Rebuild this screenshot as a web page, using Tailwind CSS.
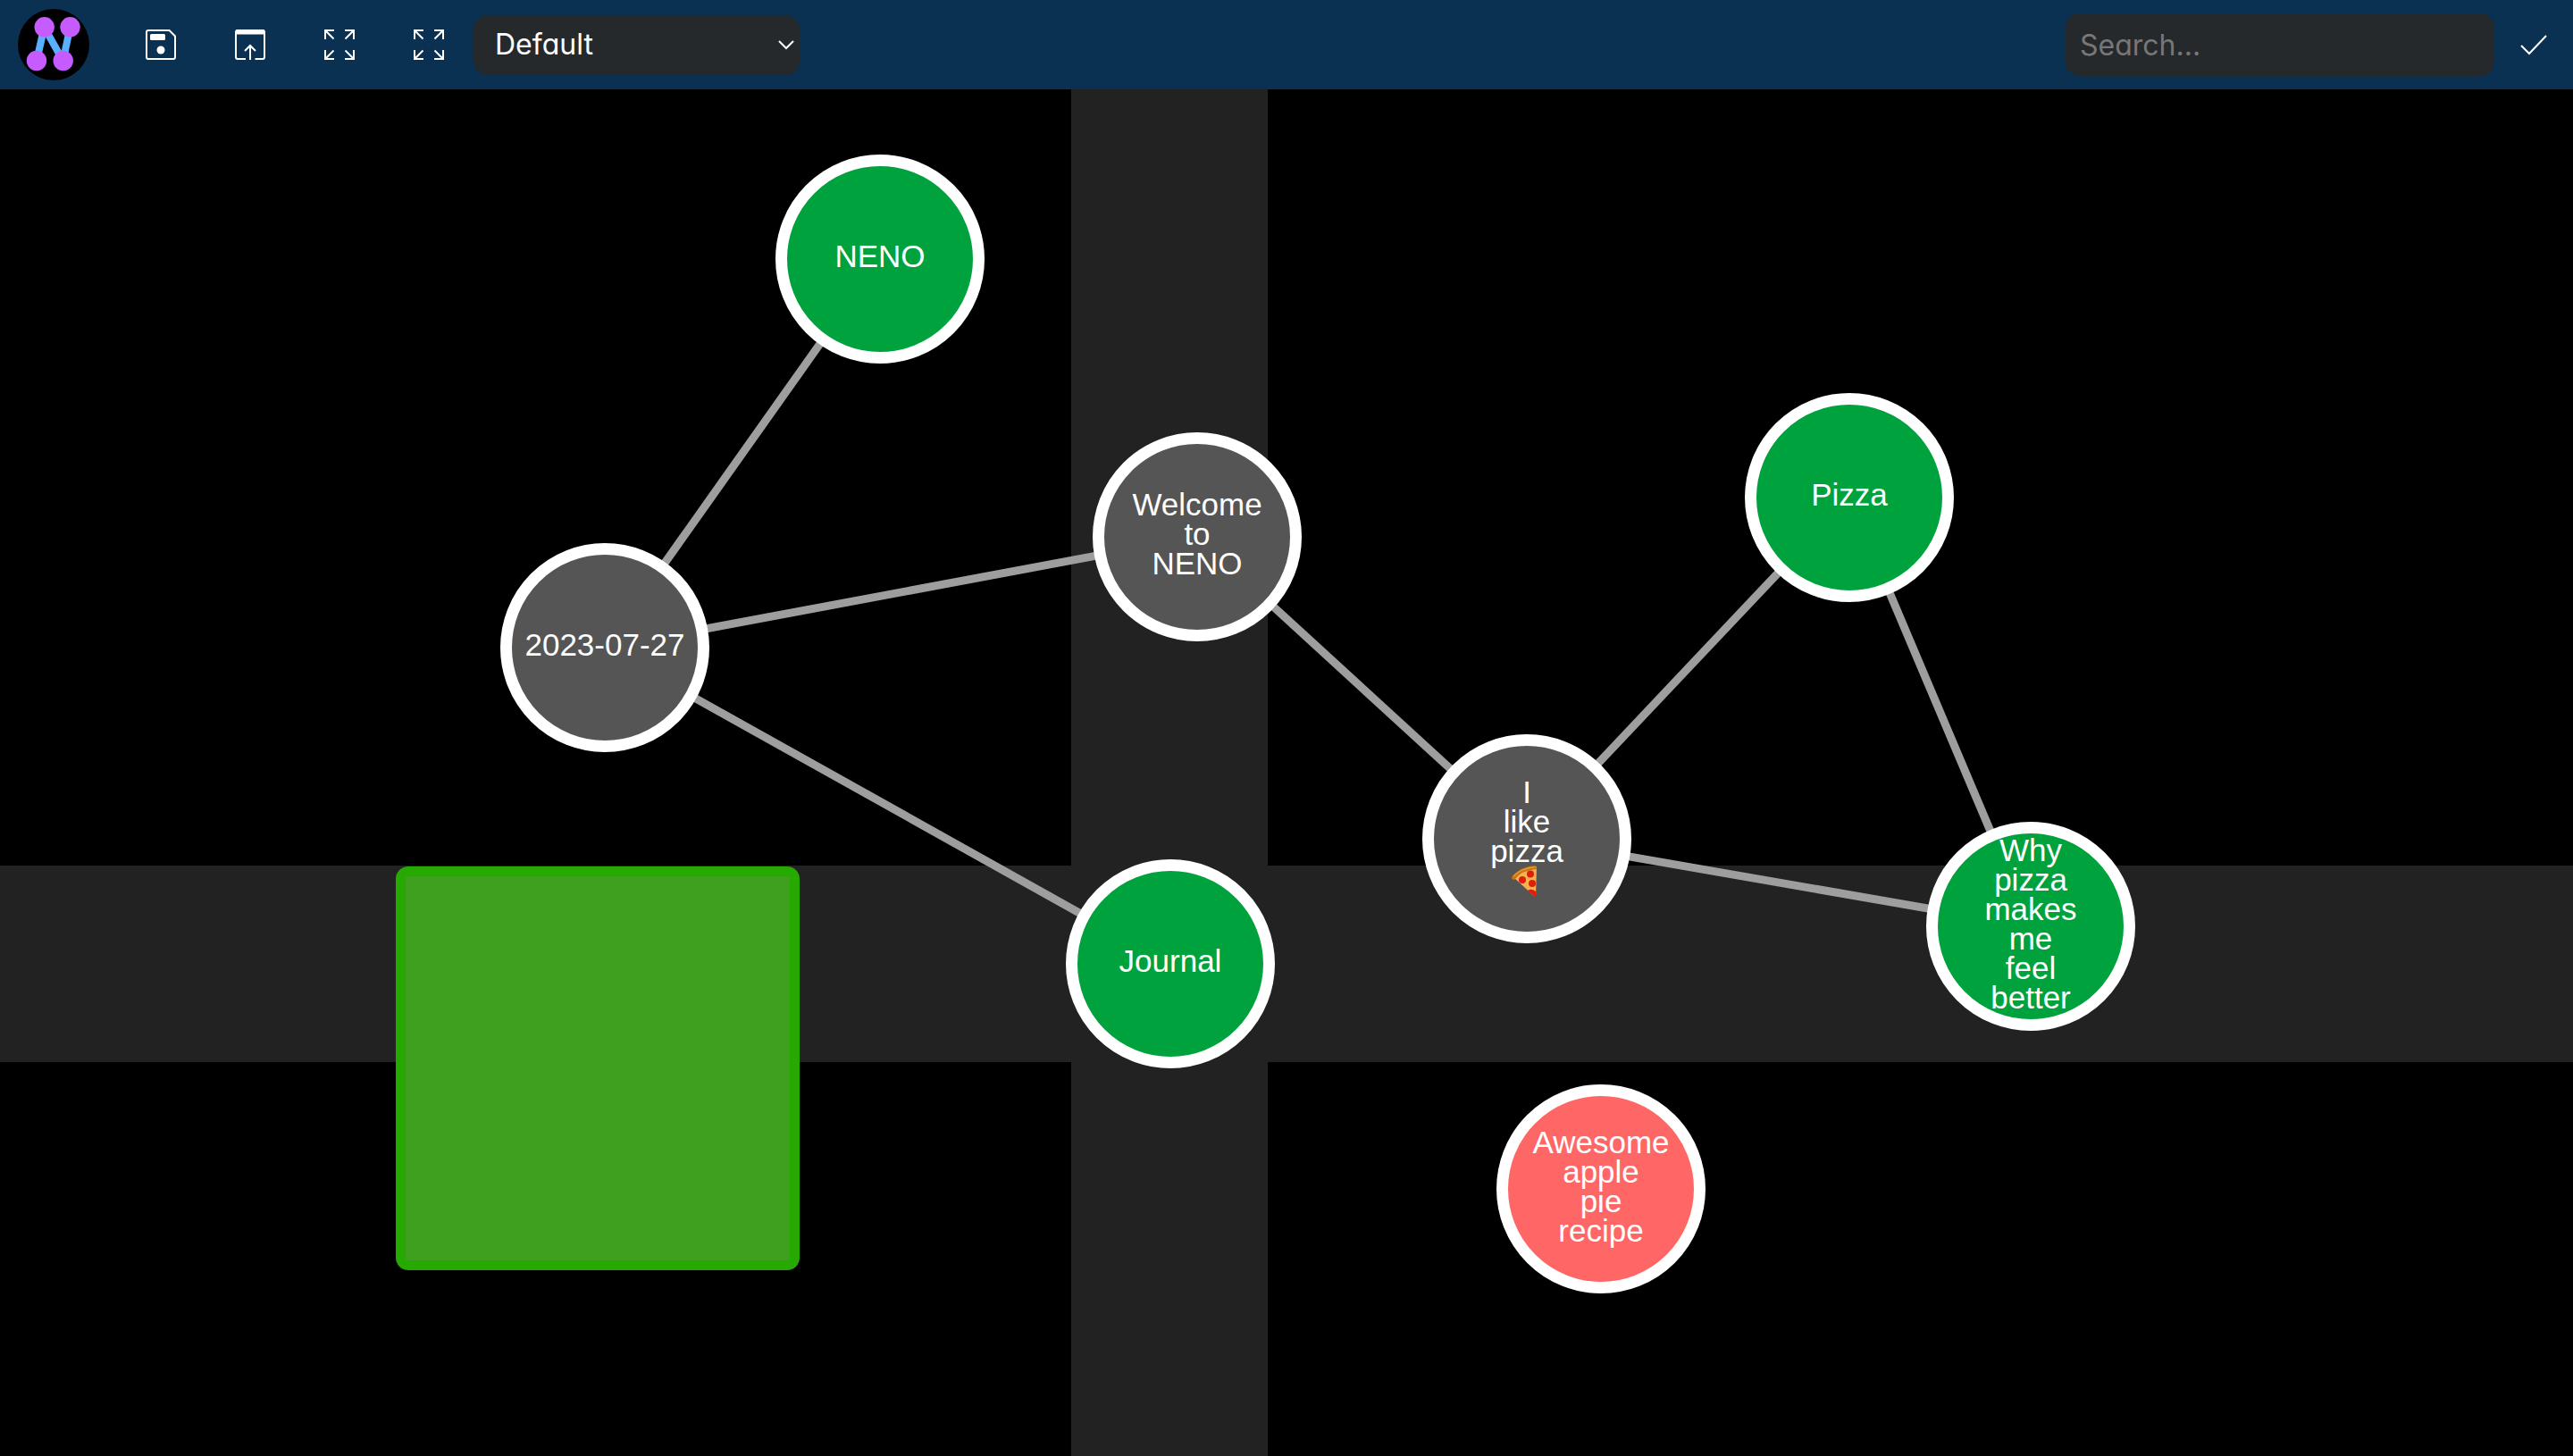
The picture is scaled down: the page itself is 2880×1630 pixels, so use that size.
<!DOCTYPE html>
<html lang="en">
<head>
<meta charset="utf-8">
<meta name="viewport" content="width=device-width, initial-scale=1">
<title>NENO</title>
<script src="https://cdn.jsdelivr.net/npm/@tailwindcss/browser@4"></script>
</head>
<body class="flex min-h-screen flex-col bg-black text-white">
<header class="flex h-[100px] shrink-0 items-center bg-[#0a3152] font-[Inter,sans-serif] [font-feature-settings:'cv11']">
  <a href="#" aria-label="NENO home" class="ml-5 mr-[30px] shrink-0">
    <svg class="size-20" viewBox="20 10 80 80" aria-hidden="true">
      <circle cx="60" cy="50" r="40" fill="#000"/>
      <path d="M41 68 49.500 30.500 70.500 68 78.500 30.500" fill="none" stroke="#58b0ff" stroke-width="8"/>
      <g fill="#c65cff"><circle cx="49.700" cy="30.300" r="11.200"/><circle cx="78.500" cy="30.300" r="11.200"/><circle cx="41" cy="68" r="11.200"/><circle cx="70.700" cy="68" r="11.200"/></g>
    </svg>
  </a>
  <nav class="flex shrink-0" aria-label="Graph actions">
    <button type="button" aria-label="Save" class="flex size-[100px] items-center justify-center">
      <svg class="size-[34px]" viewBox="0 0 34 34" fill="none" stroke="#fff" stroke-width="2"><path d="M3 1H26.500L33 7.500V31a2 2 0 0 1-2 2H3a2 2 0 0 1-2-2V3a2 2 0 0 1 2-2z"/><rect x="5" y="5" width="17" height="7" rx="1.500" fill="#fff" stroke="none"/><circle cx="17" cy="23" r="4.500" fill="#fff" stroke="none"/></svg>
    </button>
    <button type="button" aria-label="Import" class="flex size-[100px] items-center justify-center">
      <svg class="size-[34px]" viewBox="0 0 34 34" fill="none" stroke="#fff" stroke-width="2"><path d="M12 33H3a2 2 0 0 1-2-2V3a2 2 0 0 1 2-2H31a2 2 0 0 1 2 2V31a2 2 0 0 1-2 2H22.500"/><path d="M1 3H33" stroke-width="5"/><path d="M17 34V18M11 24 17 18 23 24"/></svg>
    </button>
    <button type="button" aria-label="Fit view" class="flex size-[100px] items-center justify-center">
      <svg class="size-[34px]" viewBox="0 0 34 34" fill="none" stroke="#fff" stroke-width="2"><path d="M1 11V1H11M1 1 10.500 10.500M23 1H33V11M33 1 23.500 10.500M1 23V33H11M1 33 10.500 23.500M33 23V33H23M33 33 23.500 23.500"/></svg>
    </button>
    <button type="button" aria-label="Fullscreen" class="flex size-[100px] items-center justify-center">
      <svg class="size-[34px]" viewBox="0 0 34 34" fill="none" stroke="#fff" stroke-width="2"><path d="M1 11V1H11M1 1 10.500 10.500M23 1H33V11M33 1 23.500 10.500M1 23V33H11M1 33 10.500 23.500M33 23V33H23M33 33 23.500 23.500"/></svg>
    </button>
  </nav>
  <div class="grid w-[365px] shrink-0 items-center">
    <select aria-label="View" class="col-start-1 row-start-1 h-[67px] w-full appearance-none rounded-2xl bg-[#25292c] pl-6 pr-12 text-[32px] outline-none">
      <option>Default</option>
    </select>
    <svg class="pointer-events-none col-start-1 row-start-1 mr-1.5 h-3 w-[18px] justify-self-end" viewBox="0 0 18 12" fill="none" stroke="#fff" stroke-width="2" aria-hidden="true"><path d="M1 2 9 10 17 2"/></svg>
  </div>
  <input type="search" aria-label="Search" placeholder="Search..." class="ml-auto h-[70px] w-[480px] rounded-2xl bg-[#25292c] px-4 text-[32px] outline-none placeholder:text-[#777]">
  <button type="button" aria-label="Apply" class="flex h-[100px] w-[88px] shrink-0 items-center justify-center">
    <svg class="h-6 w-[30px]" viewBox="0 0 30 24" fill="none" stroke="#fff" stroke-width="2"><path d="M1 13 10 22 29 2"/></svg>
  </button>
</header>
<main class="relative flex-1 overflow-hidden font-['Liberation_Sans',Arial,sans-serif] text-[35px]/[33px]">
  <div class="absolute inset-y-0 left-[1199px] w-[220px] bg-[#222]"></div>
  <div class="absolute inset-x-0 top-[869px] h-[220px] bg-[#222]"></div>
  <div class="absolute left-[443px] top-[870px] size-[452px] rounded-[14px] border-[11px] border-[#26a900] bg-[#3fa020]"></div>
  <svg class="absolute inset-0 size-full" stroke="#9e9e9e" stroke-width="9" aria-hidden="true">
    <line x1="985" y1="190" x2="677" y2="625"/>
    <line x1="677" y1="625" x2="1340" y2="501"/>
    <line x1="677" y1="625" x2="1310" y2="979"/>
    <line x1="1340" y1="501" x2="1709" y2="839"/>
    <line x1="1709" y1="839" x2="2070" y2="457"/>
    <line x1="1709" y1="839" x2="2273" y2="937"/>
    <line x1="2070" y1="457" x2="2273" y2="937"/>
  </svg>
  <div class="absolute left-[868px] top-[73px] flex size-[234px] flex-col items-center justify-center rounded-full border-[13px] border-white bg-[#00a23d] pb-[7px]">NENO</div>
  <div class="absolute left-[560px] top-[508px] flex size-[234px] flex-col items-center justify-center whitespace-nowrap rounded-full border-[13px] border-white bg-[#555] pb-[7px]">2023-07-27</div>
  <div class="absolute left-[1223px] top-[384px] flex size-[234px] flex-col items-center justify-center rounded-full border-[13px] border-white bg-[#555] pb-[7px]"><span>Welcome</span><span>to</span><span>NENO</span></div>
  <div class="absolute left-[1193px] top-[862px] flex size-[234px] flex-col items-center justify-center rounded-full border-[13px] border-white bg-[#00a23d] pb-[7px]">Journal</div>
  <div class="absolute left-[1592px] top-[722px] flex size-[234px] flex-col items-center justify-center rounded-full border-[13px] border-white bg-[#555] pb-[7px]"><span>I</span><span>like</span><span>pizza</span>
    <svg class="h-[33px] w-9 overflow-visible" viewBox="0 0 36 33" role="img" aria-label="Pizza slice">
      <path d="M3 13Q12 2 29 1L28 34 26 34Z" fill="#f7b14f"/>
      <path d="M1 13Q10 1 28 0L29 4Q12 5 4 16Q1 16 1 13Z" fill="#c87413"/>
      <path d="M3 12Q12 3 27 1.500" fill="none" stroke="#e89a2c" stroke-width="1.500"/>
      <g fill="#dc1f0c"><circle cx="22" cy="9.500" r="4"/><circle cx="13" cy="16" r="4"/><circle cx="24" cy="20" r="4"/><path d="M19 28Q23 25 28 29V34H26Z"/></g>
    </svg>
  </div>
  <div class="absolute left-[1953px] top-[340px] flex size-[234px] flex-col items-center justify-center rounded-full border-[13px] border-white bg-[#00a23d] pb-[7px]">Pizza</div>
  <div class="absolute left-[2156px] top-[820px] flex size-[234px] flex-col items-center justify-center rounded-full border-[13px] border-white bg-[#00a23d] pb-[7px]"><span>Why</span><span>pizza</span><span>makes</span><span>me</span><span>feel</span><span>better</span></div>
  <div class="absolute left-[1675px] top-[1114px] flex size-[234px] flex-col items-center justify-center rounded-full border-[13px] border-white bg-[#ff6666] pb-[7px]"><span>Awesome</span><span>apple</span><span>pie</span><span>recipe</span></div>
</main>
</body>
</html>
